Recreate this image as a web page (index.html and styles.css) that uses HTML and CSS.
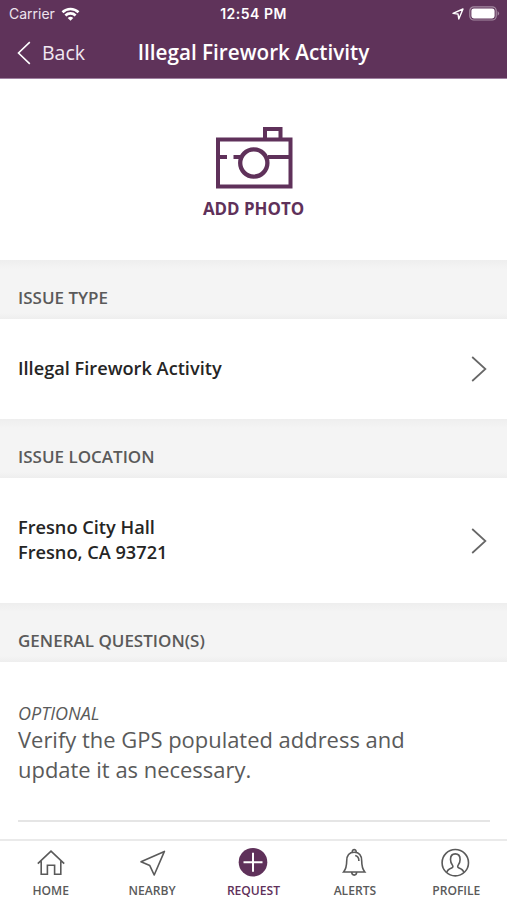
FILE: index.html
```html
<!DOCTYPE html>
<html lang="en">
<head>
<meta charset="utf-8">
<title>Illegal Firework Activity</title>
<link rel="stylesheet" href="styles.css">
</head>
<body>
<div class="app">
  <header class="header">
    <div class="status">
      <div class="carrier"><span>Carrier</span>
        <svg width="19" height="14" viewBox="0 0 18 14" fill="none" stroke="#fff" stroke-width="2.6"><path d="M1 5.200a11.500 11.500 0 0 1 16 0M3.900 8.500a7.300 7.300 0 0 1 10.200 0"/><path d="M9 13.800 6.200 11a4 4 0 0 1 5.600 0Z" fill="#fff" stroke="none"/></svg>
      </div>
      <div class="clock">12:54 PM</div>
      <div class="indicators">
        <svg width="12" height="12" viewBox="0 0 12 12" fill="none" stroke="#fff" stroke-width="1.4" stroke-linejoin="round"><path d="M1 5.400 11 1 6.800 11 6 6Z"/></svg>
        <svg width="31" height="15" viewBox="0 0 31 15"><rect x=".8" y=".8" width="26.4" height="13.2" rx="4" fill="none" stroke="#a58ba2" stroke-width="1.2"/><rect x="2.4" y="2.4" width="23.2" height="10" rx="2.4" fill="#fff"/><path d="M28.600 5.100q3 2.300 0 4.600Z" fill="#a58ba2"/></svg>
      </div>
    </div>
    <nav class="navbar">
      <a class="back"><svg width="14" height="24" viewBox="0 0 14 24" fill="none" stroke="#fff" stroke-width="1.6"><path d="M12.800 1.200 1.500 12l11.300 10.800"/></svg><span>Back</span></a>
      <h1 class="title">Illegal Firework Activity</h1>
    </nav>
  </header>
  <main class="content">
    <section class="photo">
      <svg width="78" height="64" viewBox="0 0 78 64" fill="none" stroke="#5f315a" stroke-width="4"><rect x="3" y="13.500" width="72.500" height="47"/><path d="M50 13V3h15.500v10M5 31h7M18.500 31h7M53 31h21"/><circle cx="38.800" cy="37" r="13.600" stroke-width="4.300"/></svg>
      <span class="photo-label">ADD PHOTO</span>
    </section>
    <h2 class="section-head">ISSUE TYPE</h2>
    <section class="row type-row"><p class="issue">Illegal Firework Activity</p>
      <svg width="16" height="26" viewBox="0 0 16 26" fill="none" stroke="#666" stroke-width="1.7"><path d="m1.200 1 13.200 12L1.200 25"/></svg></section>
    <h2 class="section-head">ISSUE LOCATION</h2>
    <section class="row location-row"><p class="location">Fresno City Hall<br>Fresno, CA 93721</p>
      <svg width="16" height="26" viewBox="0 0 16 26" fill="none" stroke="#666" stroke-width="1.7"><path d="m1.200 1 13.200 12L1.200 25"/></svg></section>
    <h2 class="section-head">GENERAL QUESTION(S)</h2>
    <section class="question">
      <em class="optional">OPTIONAL</em>
      <p class="prompt">Verify the GPS populated address and<br>update it as necessary.</p>
      <div class="field-line"></div>
    </section>
  </main>
  <nav class="tabs">
    <a class="tab"><svg width="30" height="30" viewBox="0 0 30 30" fill="none" stroke="#5a5a5a" stroke-width="1.6"><path d="M1.800 16.700 15 4.200l13.200 12.500M5.200 14.200v13.100h6.200v-9h7.200v9h6.200V14.200"/></svg><span>HOME</span></a>
    <a class="tab"><svg width="30" height="30" viewBox="0 0 30 30" fill="none" stroke="#5a5a5a" stroke-width="1.600" stroke-linejoin="round"><path d="M4 14.800 27.400 4.400 17.200 28 12.800 18.600Z"/></svg><span>NEARBY</span></a>
    <a class="tab active"><svg width="30" height="30" viewBox="0 0 30 30"><circle cx="15" cy="15.200" r="14.300" fill="#5f315a"/><path d="M15 5.700v19M5.500 15.200h19" stroke="#fff" stroke-width="2"/></svg><span>REQUEST</span></a>
    <a class="tab"><svg width="30" height="30" viewBox="0 0 30 30" fill="none" stroke="#5a5a5a" stroke-width="1.600"><path d="M3.600 25c2.400-3 3.100-6 3.100-11C6.700 8.500 9.500 5.200 14.200 5.200s7.500 3.300 7.500 8.800c0 5 .7 8 3.100 11ZM12.200 5.200c-.4-3.400 4.400-3.400 4 0M11.700 25.300c.3 3.800 4.700 3.800 5 0M15.200 8.500c2.600.5 3.700 2.700 3.700 5.500"/></svg><span>ALERTS</span></a>
    <a class="tab"><svg width="30" height="30" viewBox="0 0 30 30" fill="none" stroke="#5a5a5a" stroke-width="1.600"><circle cx="14.300" cy="15.700" r="13.200"/><path d="M5.800 25.300c.6-3 2.400-3.500 5.300-4.600 1-.4 1-1.600.3-2.600-1-1.400-1.900-3.300-1.900-5.700 0-3.400 1.800-5.500 4.800-5.500s4.800 2.100 4.800 5.500c0 2.400-.9 4.300-1.900 5.700-.7 1-.7 2.200.3 2.600 2.900 1.100 4.700 1.600 5.300 4.600"/></svg><span>PROFILE</span></a>
  </nav>
</div>
</body>
</html>
```
FILE: styles.css
```css
* { box-sizing: border-box; }
body { margin: 0; background: #fff; font-family: "Open Sans", sans-serif; color: #5a5a5a; }
h1, h2, p { margin: 0; }
svg { display: block; flex: none; }
.app { width: 507px; height: 900px; display: flex; flex-direction: column; overflow: hidden; }
.header { height: 79px; background: #5f335a; border-bottom: 1px solid #9f80a0; color: #fff; }
.status { height: 27px; display: grid; grid-template-columns: 1fr auto 1fr; align-items: center; padding: 0 7px 0 9px; font-family: Inter, sans-serif; }
.carrier { display: flex; align-items: center; gap: 6px; font-size: 14px; color: #eee3ee; }
.clock { font-size: 14px; font-weight: 600; letter-spacing: .5px; margin-right: 2px; }
.indicators { display: flex; justify-content: flex-end; align-items: center; gap: 5px; }
.navbar { height: 51px; display: grid; grid-template-columns: 1fr auto 1fr; align-items: center; padding: 0 17px; }
.back { display: flex; align-items: center; gap: 11px; font-size: 19.5px; line-height: 28px; color: #f1e8f1; }
.title { font-size: 20.7px; line-height: 28px; font-weight: 600; white-space: nowrap; padding-bottom: 2px; }
.content { flex: 1; min-height: 0; }
.photo { height: 181px; display: flex; flex-direction: column; align-items: center; padding-top: 47px; gap: 7px; color: #5f315a; }
.photo-label { font-size: 16.9px; line-height: 24px; font-weight: 700; }
.section-head { height: 59px; background: linear-gradient(#eee 0, #f4f4f4 9px, #f4f4f4 53px, #eee 100%); padding: 26px 18px 0; font-size: 17px; line-height: 24px; font-weight: 600; }
.row { display: flex; align-items: center; justify-content: space-between; padding: 0 20px 0 18px; font-size: 18.2px; line-height: 25px; font-weight: 600; color: #252525; }
.issue, .location { padding-bottom: 2px; }
.type-row { height: 100px; }
.location-row { height: 125px; }
.question { padding: 39px 17px 0 18px; }
.optional { display: block; font-size: 18px; line-height: 24px; }
.prompt { font-size: 21.95px; line-height: 29.5px; }
.field-line { height: 2px; background: #e5e5e5; margin-top: 36px; }
.tabs { height: 61px; border-top: 2px solid #eaeaea; display: grid; grid-template-columns: repeat(5, 1fr); background: #fff; }
.tab { display: flex; flex-direction: column; align-items: center; padding-top: 6px; gap: 5px; font-size: 12.1px; line-height: 17px; font-weight: 600; }
.active { color: #5f315a; }
```
